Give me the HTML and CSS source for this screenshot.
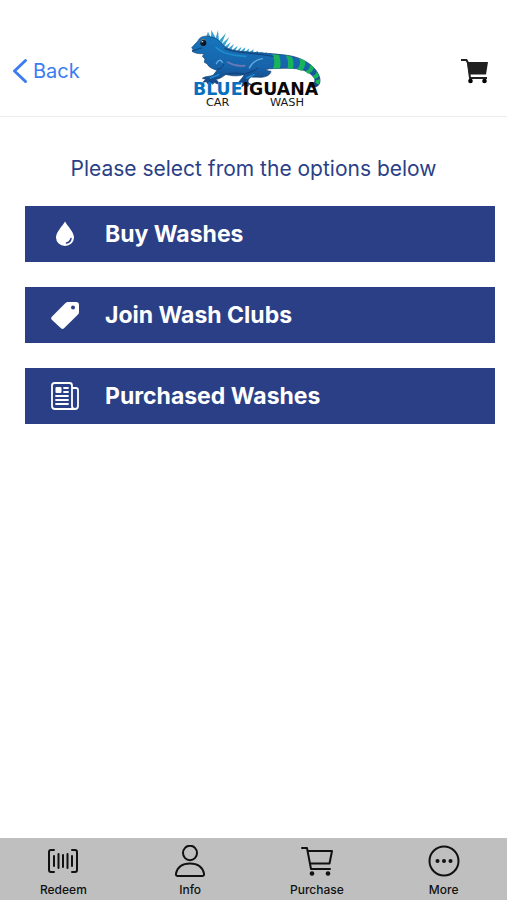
FILE: index.html
```html
<!DOCTYPE html>
<html lang="en">
<head>
<meta charset="utf-8">
<meta name="viewport" content="width=device-width, initial-scale=1">
<title>Blue Iguana Car Wash</title>
<link rel="stylesheet" href="styles.css">
</head>
<body>
<header class="header">
  <a class="back" href="#back">
    <svg class="back-icon" viewBox="0 0 16 26" aria-hidden="true"><path d="M13.500 2.500 2.500 13l11 10.500"/></svg>
    <span>Back</span>
  </a>
  <svg class="logo" viewBox="-4 0 450 285" role="img" aria-label="Blue Iguana Car Wash">
    <defs>
      <linearGradient id="skin" x1="0" y1="0" x2="0" y2="1">
        <stop offset="0" stop-color="#1676bd"/>
        <stop offset=".6" stop-color="#1763aa"/>
        <stop offset="1" stop-color="#123f7d"/>
      </linearGradient>
    </defs>
    <g fill="#3ba3d2">
      <path d="M76 54 83 35 92 53 93 30 106 54 113 31 116 62 137 39 124 72 147 51 131 82 151 67 139 90 161 71 151 94 172 77 164 96 184 80 177 97 195 82 191 98 207 85 203 99 220 88 217 101 233 92 231 102 247 95 244 104 260 97 258 105 273 98 271 107 286 101 284 109 120 108Z"/>
    </g>
    <path fill="url(#skin)" stroke="#123c70" stroke-width="2" d="M34 84C39 75 49 70 54 61C60 48 77 46 92 51C112 54 120 67 132 79C151 94 180 94 207 96C244 99 280 101 315 105C354 110 386 124 407 151C426 176 423 202 397 202C388 201 386 195 392 192C405 190 408 179 397 168C377 147 347 144 309 145L276 146C257 146 249 151 272 154C270 165 257 172 239 172L212 171C205 176 200 183 206 190L218 196L205 193L203 200L194 194L184 200L188 187L175 187C182 177 190 170 192 163C173 170 151 168 137 163C125 172 115 178 106 178C111 182 116 186 112 192L101 187L98 193L90 187L82 191L78 185L68 187L76 178L66 175C75 167 90 171 99 165L110 151C96 146 85 142 81 132L72 127L74 117L66 109L72 101C60 101 47 102 35 94C39 91 42 90 34 84Z"/>
    <g fill="#19b35b">
      <path d="M276 103 296 105C301 119 302 132 299 145L278 146C284 132 283 116 276 103Z"/>
      <path d="M316 106 334 110C341 123 341 136 337 147L321 145C326 132 323 118 316 106Z"/>
      <path d="M357 115 374 122C377 134 371 145 364 153L350 148C359 138 362 127 357 115Z"/>
      <path d="M389 132 400 142C400 152 391 159 383 161L374 154C386 149 391 142 389 132Z"/>
      <path d="M408 153 416 166C414 174 408 176 402 177L397 168C405 165 409 160 408 153Z"/>
      <path d="M419 178C419 184 418 189 415 194L405 188 407 180Z"/>
    </g>
    <g fill="none" stroke-linecap="round">
      <path stroke="#64a9df" stroke-width="4" d="M108 131C112 121 122 116 126 127M207 144C215 127 229 119 246 116"/>
      <path stroke="#6c79b5" stroke-width="5" d="M142 127C160 137 178 139 193 137"/>
      <path stroke="#123d77" stroke-width="3" d="M36 91C48 93 53 84 64 84M112 148C125 145 129 139 130 133M137 163C155 158 174 158 192 163M196 160C211 157 224 153 232 144M133 86C174 101 225 99 278 109"/>
      <path stroke="#1e89cb" stroke-width="5" d="M107 82C125 101 161 107 197 109M90 174 115 164M199 174 221 164"/>
    </g>
    <circle cx="69" cy="69" r="9" fill="#10141a"/>
    <path d="M63 67C61 60 67 56 73 59" fill="none" stroke="#9a7749" stroke-width="3"/>
    <circle cx="67" cy="65" r="2" fill="#fff"/>
    <text class="logo-name" x="38" y="226"><tspan class="logo-blue">BLUE</tspan>IGUANA</text>
    <text class="logo-sub" x="112" y="259">CAR</text>
    <text class="logo-sub" x="320" y="259">WASH</text>
  </svg>
  <button class="cart" type="button" aria-label="Cart">
    <svg viewBox="0 0 28 26" aria-hidden="true">
      <path d="M0 2h5.500l1.500 3 2 15h17" fill="none" stroke="#202020" stroke-width="2" stroke-linejoin="round"/>
      <path d="M6 4h21l-2 12.500H8z" fill="#202020"/>
      <circle cx="9.500" cy="23" r="2.300"/><circle cx="23.500" cy="23" r="2.300"/>
    </svg>
  </button>
</header>
<main class="main">
  <h1 class="title">Please select from the options below</h1>
  <button class="option" type="button">
    <svg class="option-icon" viewBox="0 0 28 28" aria-hidden="true">
      <path fill="#fff" d="M14 1.500C11.500 6 5 12 5 17.500a9 8.500 0 0 0 18 0C23 12 16.500 6 14 1.500Z"/>
      <path d="M20 18.500c-.5 2.500-2 4-4.500 4.500" fill="none" stroke="#2b3f87" stroke-width="1.500" stroke-linecap="round"/>
    </svg>
    <span>Buy Washes</span>
  </button>
  <button class="option" type="button">
    <svg class="option-icon" viewBox="0 0 28 28" aria-hidden="true">
      <path fill="#fff" fill-rule="evenodd" d="M17 1h8q3 0 3 3v7q0 1.500-1 2.500L13 27.200q-1.500 1.400-3 0L.8 18.800q-1.300-1.500 0-3L14.500 2Q15.500 1 17 1ZM22 4.500a2 2 0 1 0 0 4 2 2 0 0 0 0-4Z"/>
    </svg>
    <span>Join Wash Clubs</span>
  </button>
  <button class="option" type="button">
    <svg class="option-icon" viewBox="0 0 28 28" aria-hidden="true">
      <g fill="none" stroke="#fff" stroke-width="1.800" stroke-linecap="round">
        <path d="M24 27H4q-3 0-3-3V3.500Q1 1 3.500 1h15Q21 1 21 3.500V24q0 3 3 3t3-3V8q0-2-2-2h-4"/>
        <path d="M13 6h4M13 10h4M5 14h12M5 18h12M5 22h12"/>
      </g>
      <rect x="4.500" y="5" width="6" height="6" rx="1" fill="#fff"/>
    </svg>
    <span>Purchased Washes</span>
  </button>
</main>
<nav class="tabs">
  <a class="tab" href="#redeem">
    <svg viewBox="0 0 32 32" aria-hidden="true"><path d="M7 5H4Q2 5 2 7v18q0 2 2 2h3M25 5h3q2 0 2 2v18q0 2-2 2h-3M7 11v10M11.500 9v14M16 10v12M20.500 9v14M25 11v10"/></svg>
    <span>Redeem</span>
  </a>
  <a class="tab" href="#info">
    <svg viewBox="0 0 32 32" aria-hidden="true"><ellipse cx="16" cy="8" rx="7" ry="7.300"/><path d="M4 31q-2.500 0-2-2.500C3.500 22 9 18.500 16 18.500S28.500 22 30 28.500q.5 2.500-2 2.500Z"/></svg>
    <span>Info</span>
  </a>
  <a class="tab" href="#purchase">
    <svg viewBox="0 0 32 32" aria-hidden="true"><path d="M1 3h5l4 21h19M7 6h24l-2.500 12.500H9"/><circle class="dot" cx="11" cy="28.500" r="2.300"/><circle class="dot" cx="27" cy="28.500" r="2.300"/></svg>
    <span>Purchase</span>
  </a>
  <a class="tab" href="#more">
    <svg viewBox="0 0 32 32" aria-hidden="true"><circle cx="16" cy="16" r="14.500"/><circle class="dot" cx="9.500" cy="16" r="2"/><circle class="dot" cx="16" cy="16" r="2"/><circle class="dot" cx="22.500" cy="16" r="2"/></svg>
    <span>More</span>
  </a>
</nav>
</body>
</html>
```
FILE: styles.css
```css
* {
  box-sizing: border-box;
}

body {
  margin: 0;
  min-height: 100vh;
  display: flex;
  flex-direction: column;
  background: #fff;
  font-family: Inter, "Liberation Sans", sans-serif;
}

button {
  border: 0;
  font: inherit;
  cursor: pointer;
}

a {
  text-decoration: none;
}

.header {
  display: grid;
  grid-template-columns: 1fr auto 1fr;
  align-items: center;
  padding: 20px 18px 1px;
  border-bottom: 1px solid #ececec;
}

.back {
  display: flex;
  align-items: center;
  gap: 5px;
  margin-left: -6px;
  padding-top: 6px;
  color: #3b7df0;
  font-size: 20px;
  line-height: 26px;
}

.back-icon {
  width: 16px;
  height: 26px;
  fill: none;
  stroke: #3b7df0;
  stroke-width: 3;
  stroke-linecap: round;
  stroke-linejoin: round;
}

.logo {
  width: 150px;
  height: 95px;
}

.logo-name {
  font: bold 52px "DejaVu Sans", sans-serif;
  fill: #080808;
}

.logo-name .logo-blue {
  fill: #086fbe;
}

.logo-sub {
  font: 34px "DejaVu Sans", sans-serif;
  fill: #181818;
  text-anchor: middle;
}

.cart {
  justify-self: end;
  padding: 6px 0 0;
  background: none;
}

.cart svg {
  display: block;
  width: 28px;
  height: 26px;
}

.main {
  flex: 1;
  display: flex;
  flex-direction: column;
  gap: 25px;
  padding: 40px 12px 24px 25px;
}

.title {
  margin: 0 13px 0 0;
  color: #2b3f87;
  font-size: 21px;
  font-weight: 400;
  line-height: 24px;
  text-align: center;
}

.option {
  display: flex;
  align-items: center;
  gap: 26px;
  height: 56px;
  padding: 0 26px;
  background: #2b3f87;
  color: #fff;
  font-size: 23px;
  font-weight: 700;
  line-height: 30px;
  text-align: left;
}

.option-icon {
  width: 28px;
  height: 28px;
}

.tabs {
  display: grid;
  grid-template-columns: repeat(4, 1fr);
  background: #bfbfbf;
}

.tab {
  display: flex;
  flex-direction: column;
  align-items: center;
  gap: 5px;
  padding: 7px 0 2px;
  color: #111;
  font-size: 12px;
  font-weight: 500;
  line-height: 16px;
}

.tab svg {
  width: 32px;
  height: 32px;
  fill: none;
  stroke: #111;
  stroke-width: 2;
  stroke-linecap: round;
  stroke-linejoin: round;
}

.tab .dot {
  fill: #111;
  stroke: none;
}
```
